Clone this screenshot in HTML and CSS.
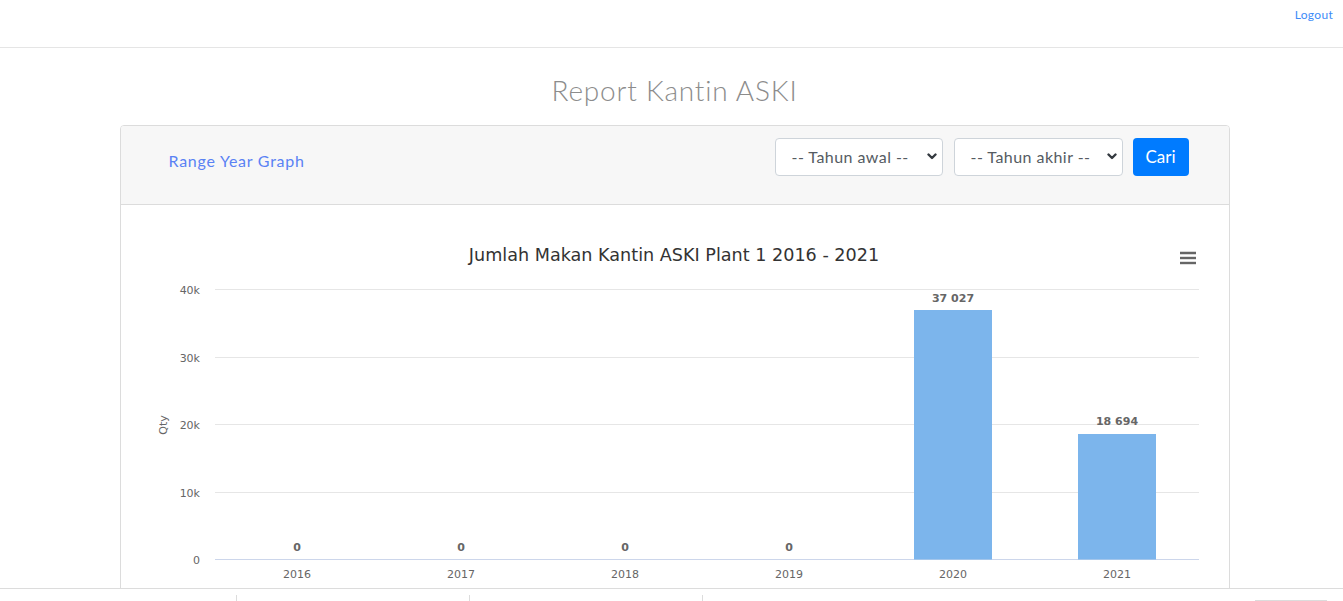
FILE: index.html
```html
<!DOCTYPE html>
<html>
<head>
<meta charset="utf-8">
<link rel="stylesheet" href="styles.css">
</head>
<body>
<header class="topbar">
  <a class="logout" href="#">Logout</a>
</header>

<main class="container">
  <h2 class="page-title">Report Kantin ASKI</h2>

  <section class="card">
    <div class="card-header">
      <a class="range-link" href="#">Range Year Graph</a>
      <form class="filter">
        <div class="select-wrap w1">
          <select class="select"><option>-- Tahun awal --</option></select>
          <svg class="chev" width="10" height="7" viewBox="0 0 10 7"><path d="M1.5 1.5 L5 5 L8.5 1.5" fill="none" stroke="#343a40" stroke-width="2.4" stroke-linecap="round" stroke-linejoin="round"/></svg>
        </div>
        <div class="select-wrap w2">
          <select class="select"><option>-- Tahun akhir --</option></select>
          <svg class="chev" width="10" height="7" viewBox="0 0 10 7"><path d="M1.5 1.5 L5 5 L8.5 1.5" fill="none" stroke="#343a40" stroke-width="2.4" stroke-linecap="round" stroke-linejoin="round"/></svg>
        </div>
        <button type="button" class="btn">Cari</button>
      </form>
    </div>
    <div class="card-body">
      <svg class="chart" width="1108" height="400" viewBox="0 0 1108 400">
        <text class="c-title" x="553" y="56" text-anchor="middle">Jumlah Makan Kantin ASKI Plant 1 2016 - 2021</text>
        <g class="menu" stroke="#666" stroke-width="2.4">
          <line x1="1059" y1="48" x2="1075" y2="48"/>
          <line x1="1059" y1="53" x2="1075" y2="53"/>
          <line x1="1059" y1="58" x2="1075" y2="58"/>
        </g>
        <g stroke="#e6e6e6" stroke-width="1">
          <line x1="94" y1="84.5" x2="1078" y2="84.5"/>
          <line x1="94" y1="152.5" x2="1078" y2="152.5"/>
          <line x1="94" y1="219.5" x2="1078" y2="219.5"/>
          <line x1="94" y1="287.5" x2="1078" y2="287.5"/>
        </g>
        <line x1="94" y1="354.5" x2="1078" y2="354.5" stroke="#ccd6eb"/>
        <g class="ylab" text-anchor="end">
          <text x="79" y="89">40k</text>
          <text x="79" y="157">30k</text>
          <text x="79" y="224">20k</text>
          <text x="79" y="292">10k</text>
          <text x="79" y="359">0</text>
        </g>
        <text class="ylab" transform="translate(46 220) rotate(-90)" text-anchor="middle">Qty</text>
        <rect x="793" y="105" width="78" height="249.5" fill="#7cb5ec"/>
        <rect x="957" y="229" width="78" height="125.5" fill="#7cb5ec"/>
        <g class="dlab" text-anchor="middle">
          <text x="176" y="346">0</text>
          <text x="340" y="346">0</text>
          <text x="504" y="346">0</text>
          <text x="668" y="346">0</text>
          <text x="832" y="97">37 027</text>
          <text x="996" y="220">18 694</text>
        </g>
        <g class="xlab" text-anchor="middle">
          <text x="176" y="373">2016</text>
          <text x="340" y="373">2017</text>
          <text x="504" y="373">2018</text>
          <text x="668" y="373">2019</text>
          <text x="832" y="373">2020</text>
          <text x="996" y="373">2021</text>
        </g>
      </svg>
    </div>
  </section>
</main>

<footer class="footer">
  <div class="f-cell"></div>
  <div class="f-cell"></div>
  <div class="f-cell"></div>
  <div class="f-bar"></div>
</footer>
</body>
</html>
```

FILE: styles.css
```css
* { box-sizing: border-box; }
html, body { margin: 0; padding: 0; background: #fff; }
body {
  font-family: Lato, "Noto Sans", "Open Sans", sans-serif;
  color: #212529;
}
.topbar {
  height: 48px;
  border-bottom: 1px solid #e5e5e5;
  display: flex;
  justify-content: flex-end;
  align-items: flex-start;
  padding: 7px 10px 0 0;
}
.logout {
  font-size: 12px;
  letter-spacing: 0.3px;
  color: #3d8bf8;
  text-decoration: none;
  line-height: 16px;
}
.container {
  width: 1116px;
  margin: 0 auto;
  padding-left: 6px;
}
.page-title {
  margin: 25px 0 18px;
  text-align: center;
  font-weight: 300;
  font-size: 28px;
  letter-spacing: 0.8px;
  line-height: 34px;
  color: #8c8c8c;
}
.card {
  border: 1px solid #dcdcdc;
  border-radius: 4px;
  overflow: hidden;
}
.card-header {
  background: #f7f7f7;
  border-bottom: 1px solid #dcdcdc;
  height: 79px;
  padding: 12px 40px 0 48px;
  display: flex;
  justify-content: space-between;
  align-items: flex-start;
}
.range-link {
  margin-top: 11px;
  font-size: 16px;
  letter-spacing: 0.75px;
  line-height: 24px;
  color: #5a82f4;
  text-decoration: none;
}
.filter {
  display: flex;
  gap: 10px;
}
.select-wrap { position: relative; }
.select-wrap.w1 { width: 168px; }
.select-wrap.w2 { width: 169px; margin-left: 1px; }
.select {
  appearance: none;
  -webkit-appearance: none;
  width: 100%;
  height: 38px;
  border: 1px solid #ced4da;
  border-radius: 4px;
  background: #fff;
  padding: 0 12px 2px 16px;
  font-family: inherit;
  font-size: 16px;
  letter-spacing: 0.45px;
  color: #555b62;
}
.chev {
  position: absolute;
  right: 6px;
  top: 15px;
  pointer-events: none;
}
.btn {
  width: 56px;
  height: 38px;
  border: 0;
  border-radius: 4px;
  background: #007bff;
  color: #fff;
  font-family: inherit;
  font-size: 17px;
  padding: 0 0 2px;
}
.card-body { background: #fff; }
.chart { display: block; }
.c-title {
  font-family: "DejaVu Sans", sans-serif;
  font-size: 17.6px;
  fill: #333;
}
.ylab, .ylab text, .xlab text {
  font-family: "DejaVu Sans", sans-serif;
  font-size: 11px;
  fill: #666;
}
.dlab text {
  font-family: "DejaVu Sans", sans-serif;
  font-size: 11px;
  font-weight: bold;
  fill: #666;
}
.footer {
  position: fixed;
  left: 0;
  right: 0;
  bottom: 0;
  height: 13px;
  background: #fff;
  border-top: 1px solid #dcdcdc;
  display: flex;
  padding-left: 236px;
  padding-top: 6px;
}
.f-cell {
  width: 233px;
  border-left: 1px solid #dcdcdc;
}
.f-bar {
  margin-left: 320px;
  margin-top: 5px;
  width: 72px;
  height: 1px;
  background: #dcdcdc;
}
```
